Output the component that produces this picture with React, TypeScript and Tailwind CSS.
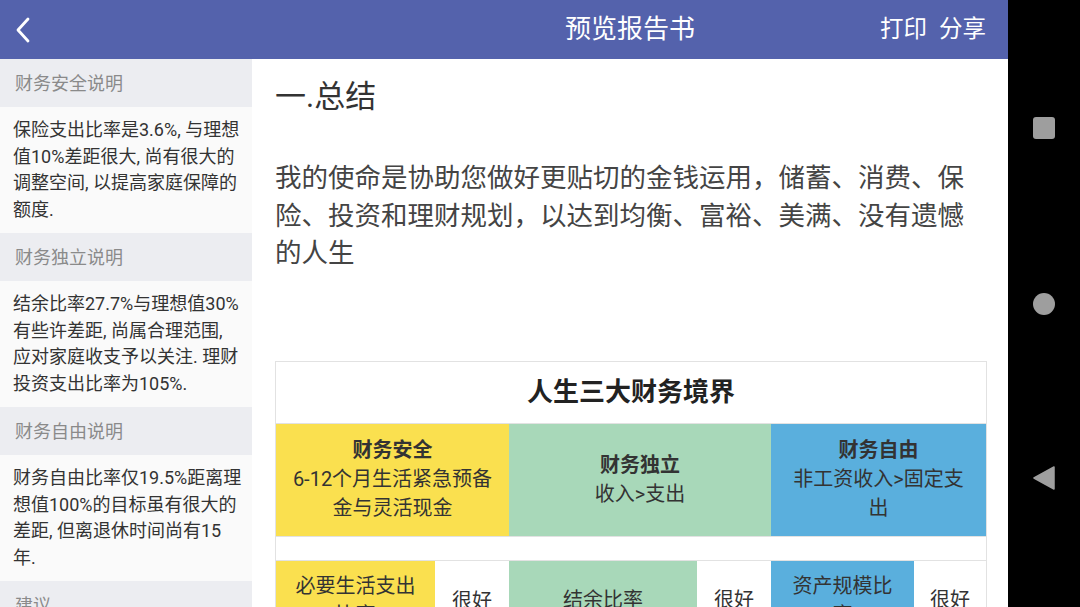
const font = { fontFamily: 'Roboto, "Noto Sans CJK SC", sans-serif' };

const notes = [
  {
    title: "财务安全说明",
    lines: ["保险支出比率是3.6%, 与理想", "值10%差距很大, 尚有很大的", "调整空间, 以提高家庭保障的", "额度."],
  },
  {
    title: "财务独立说明",
    lines: ["结余比率27.7%与理想值30%", "有些许差距, 尚属合理范围,", "应对家庭收支予以关注. 理财", "投资支出比率为105%."],
  },
  {
    title: "财务自由说明",
    lines: ["财务自由比率仅19.5%距离理", "想值100%的目标虽有很大的", "差距, 但离退休时间尚有15", "年."],
  },
  { title: "建议", lines: [] as string[] },
];

const SideBar = () => (
  <aside className="w-[252px] shrink-0 bg-[#fafafa] overflow-hidden">
    {notes.map((n) => (
      <div key={n.title}>
        <div className="h-[48px] flex items-center px-[15px] bg-[#ecedf1] text-[18px] text-[#8a8a8a]">
          {n.title}
        </div>
        {n.lines.length > 0 && (
          <p className="px-[13px] py-[10px] text-[18px] leading-[26.5px] text-[#333]">
            {n.lines.map((l) => (
              <span key={l} className="block whitespace-nowrap">
                {l}
              </span>
            ))}
          </p>
        )}
      </div>
    ))}
  </aside>
);

const Table = () => (
  <div className="border border-[#e2e2e2] text-[#333]">
    <div className="h-[62px] flex items-center justify-center text-[26px] font-bold text-[#222] border-b border-[#e2e2e2]">
      人生三大财务境界
    </div>
    <div className="flex h-[112px] text-[20px] leading-[29px] text-center">
      <div className="w-[233px] bg-[#fae04f] flex flex-col items-center justify-center px-2">
        <span className="font-bold">财务安全</span>
        <span>6-12个月生活紧急预备金与灵活现金</span>
      </div>
      <div className="w-[262px] bg-[#a8d8b9] flex flex-col items-center justify-center px-2">
        <span className="font-bold">财务独立</span>
        <span>收入&gt;支出</span>
      </div>
      <div className="flex-1 bg-[#5aafdd] flex flex-col items-center justify-center px-[18px]">
        <span className="font-bold">财务自由</span>
        <span>非工资收入&gt;固定支出</span>
      </div>
    </div>
    <div className="h-[25px] border-y border-[#e2e2e2]" />
    <div className="flex h-[80px] text-[20px] leading-[29px] text-center">
      <div className="w-[159px] bg-[#fae04f] pt-[11px]">
        必要生活支出
        <br />
        比率
      </div>
      <div className="w-[74px] flex items-center justify-center pt-[1px]">很好</div>
      <div className="w-[188px] bg-[#a8d8b9] flex items-center justify-center">结余比率</div>
      <div className="w-[74px] flex items-center justify-center">很好</div>
      <div className="w-[143px] bg-[#5aafdd] pt-[11px]">
        资产规模比
        <br />
        率
      </div>
      <div className="flex-1 flex items-center justify-center">很好</div>
    </div>
  </div>
);

const NavBar = () => (
  <div className="w-[72px] shrink-0 bg-black flex flex-col items-center">
    <div className="mt-[117px] w-[22px] h-[22px] rounded-[3px] bg-[#9e9e9e]" />
    <div className="mt-[154px] w-[22px] h-[22px] rounded-full bg-[#9e9e9e]" />
    <svg className="mt-[151px]" width="22" height="24" viewBox="0 0 22 24">
      <path d="M21 1 L1 12 L21 23 Z" fill="#9e9e9e" stroke="#9e9e9e" strokeLinejoin="round" strokeWidth="1.5" />
    </svg>
  </div>
);

export default function App() {
  return (
    <div className="w-[1080px] h-[607px] flex overflow-hidden bg-black" style={font}>
      <div className="w-[1008px] flex flex-col">
        <header className="h-[59px] shrink-0 bg-[#5462ac] flex items-center text-white">
          <div className="w-[252px] pl-[15px]">
            <svg width="16" height="28" viewBox="0 0 16 28" fill="none">
              <path d="M13 3 L3 14 L13 25" stroke="white" strokeWidth="2.8" strokeLinecap="round" strokeLinejoin="round" />
            </svg>
          </div>
          <div className="flex-1 relative flex items-center justify-center">
            <span className="text-[26px]">预览报告书</span>
            <div className="absolute right-[22px] flex gap-[12px] text-[23.5px]">
              <span>打印</span>
              <span>分享</span>
            </div>
          </div>
        </header>
        <div className="flex-1 flex min-h-0">
          <SideBar />
          <main className="flex-1 bg-white pl-[23px] pr-[21px] pt-[18px] overflow-hidden">
            <h1 className="text-[31px] leading-[40px] text-[#333]">一.总结</h1>
            <p className="mt-[42px] w-[702px] text-[26.5px] leading-[37.5px] text-[#444]">
              我的使命是协助您做好更贴切的金钱运用，储蓄、消费、保险、投资和理财规划，以达到均衡、富裕、美满、没有遗憾的人生
            </p>
            <div className="mt-[89px]">
              <Table />
            </div>
          </main>
        </div>
      </div>
      <NavBar />
    </div>
  );
}
